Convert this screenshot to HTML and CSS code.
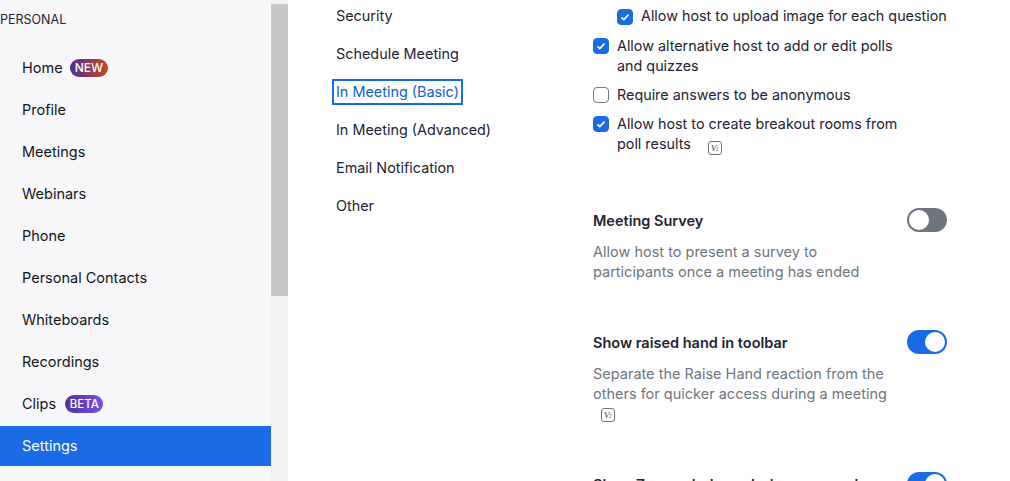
FILE: index.html
```html
<!DOCTYPE html>
<html lang="en">
<head>
<meta charset="utf-8">
<title>Settings</title>
<link rel="stylesheet" href="styles.css">
</head>
<body>
<div class="page">
  <aside class="sidebar">
    <nav class="side-nav">
      <h2 class="side-title">PERSONAL</h2>
      <ul class="side-list">
        <li class="side-item">Home <span class="badge badge-new">NEW</span></li>
        <li class="side-item">Profile</li>
        <li class="side-item">Meetings</li>
        <li class="side-item">Webinars</li>
        <li class="side-item">Phone</li>
        <li class="side-item">Personal Contacts</li>
        <li class="side-item">Whiteboards</li>
        <li class="side-item">Recordings</li>
        <li class="side-item">Clips <span class="badge badge-beta">BETA</span></li>
        <li class="side-item active">Settings</li>
      </ul>
    </nav>
    <div class="scrollbar"><div class="thumb"></div></div>
  </aside>
  <nav class="tabs">
    <a class="tab">Security</a>
    <a class="tab">Schedule Meeting</a>
    <a class="tab current">In Meeting (Basic)</a>
    <a class="tab">In Meeting (Advanced)</a>
    <a class="tab">Email Notification</a>
    <a class="tab">Other</a>
  </nav>
  <main class="content">
    <div class="checks">
      <label class="check nested"><span class="box on"><svg viewBox="0 0 16 16"><path d="M4 8.3l2.7 2.6L12 5.4"/></svg></span><span>Allow host to upload image for each question</span></label>
      <label class="check"><span class="box on"><svg viewBox="0 0 16 16"><path d="M4 8.3l2.7 2.6L12 5.4"/></svg></span><span>Allow alternative host to add or edit polls<br>and quizzes</span></label>
      <label class="check"><span class="box"></span><span>Require answers to be anonymous</span></label>
      <label class="check"><span class="box on"><svg viewBox="0 0 16 16"><path d="M4 8.3l2.7 2.6L12 5.4"/></svg></span><span>Allow host to create breakout rooms from<br>poll results <span class="vtag vtag-inline">V:</span></span></label>
    </div>
    <section class="setting survey">
      <div class="setting-text">
        <h3>Meeting Survey</h3>
        <p>Allow host to present a survey to<br>participants once a meeting has ended</p>
      </div>
      <span class="toggle off"></span>
    </section>
    <section class="setting raised">
      <div class="setting-text">
        <h3>Show raised hand in toolbar</h3>
        <p>Separate the Raise Hand reaction from the<br>others for quicker access during a meeting<span class="vtag vtag-block">V:</span></p>
      </div>
      <span class="toggle"></span>
    </section>
    <section class="setting last">
      <div class="setting-text">
        <h3>Show Zoom windows during screen share</h3>
      </div>
      <span class="toggle"></span>
    </section>
  </main>
</div>
</body>
</html>
```

FILE: styles.css
```css
* { box-sizing: border-box; }
html, body { margin: 0; height: 100%; overflow: hidden; background: #fff; }
body { font-family: Inter, "Liberation Sans", sans-serif; font-size: 14.5px; color: #131619; }
.page { display: flex; height: 481px; overflow: hidden; }

.sidebar { display: flex; flex: 0 0 288px; height: 481px; }
.side-nav { flex: 0 0 271px; background: #f7f7fa; }
.side-title { margin: 0; height: 48px; padding-top: 12px; font-size: 12.5px; line-height: 15px; font-weight: 400; color: #232333; }
.side-list { list-style: none; margin: 0; padding: 0; }
.side-item { display: flex; align-items: center; gap: 7px; height: 40px; margin-bottom: 2px; padding-left: 22px; line-height: 20px; }
.side-item.active { background: #1a6be6; color: #fff; }
.badge { display: inline-block; height: 18px; padding: 0 5px; border-radius: 9px; color: #fff; font-size: 12px; line-height: 18px; font-weight: 500; }
.badge-new { background: linear-gradient(90deg, #4f2d96, #c8471c); }
.badge-beta { margin-left: 2px; padding: 0 4.5px; font-size: 11.5px; background: linear-gradient(90deg, #52309c, #7a50e8); }
.scrollbar { flex: 0 0 17px; background: #f1f1f1; padding-top: 4px; }
.thumb { height: 292px; background: #c6c6c6; }

.tabs { flex: 0 0 305px; display: flex; flex-direction: column; gap: 18px; padding: 6px 0 0 47px; color: #232333; font-size: 14.4px; }
.tab { display: block; width: max-content; padding: 0 1px; line-height: 20px; }
.tab.current { color: #0e62d6; outline: 2px solid #1a6be6; outline-offset: 1px; }

.content { flex: 0 0 354px; }
.checks { padding-top: 6px; font-size: 14.35px; white-space: nowrap; }
.check { display: flex; gap: 8px; margin-bottom: 9px; line-height: 20px; color: #232333; }
.check.nested { margin-left: 24px; margin-bottom: 10px; }
.box { flex: 0 0 16px; width: 16px; height: 16px; margin-top: 2px; border: 1px solid #6e7680; border-radius: 4px; background: #fff; }
.check.nested .box { margin-top: 3px; }
.box.on { background: #1a6be6; border-color: #1a6be6; }
.box svg { display: block; width: 14px; height: 14px; fill: none; stroke: #fff; stroke-width: 2; }
.vtag { display: inline-block; width: 14px; height: 14px; border: 1px solid #6e7680; border-radius: 3px; font: italic 700 9px/12px "Liberation Serif", serif; color: #6e7680; text-align: center; vertical-align: -2px; }
.vtag-inline { margin-left: 13px; }
.vtag-block { display: block; margin: 4px 0 0 8px; }

.setting { display: flex; justify-content: space-between; align-items: flex-start; }
.setting h3 { margin: 0; font-size: 14.5px; line-height: 20px; font-weight: 600; color: #232333; }
.setting p { margin: 11px 0 0; line-height: 20px; color: #6e7680; }
.survey { margin-top: 56px; }
.raised { margin-top: 51px; }
.last { margin-top: 53px; }
.toggle { position: relative; flex: 0 0 40px; width: 40px; height: 24px; margin-top: -3px; border-radius: 12px; background: #1a6be6; }
.toggle::after { content: ""; position: absolute; top: 2px; right: 2px; width: 20px; height: 20px; border-radius: 50%; background: #fff; }
.toggle.off { background: #6e7680; }
.toggle.off::after { right: auto; left: 2px; }
```
